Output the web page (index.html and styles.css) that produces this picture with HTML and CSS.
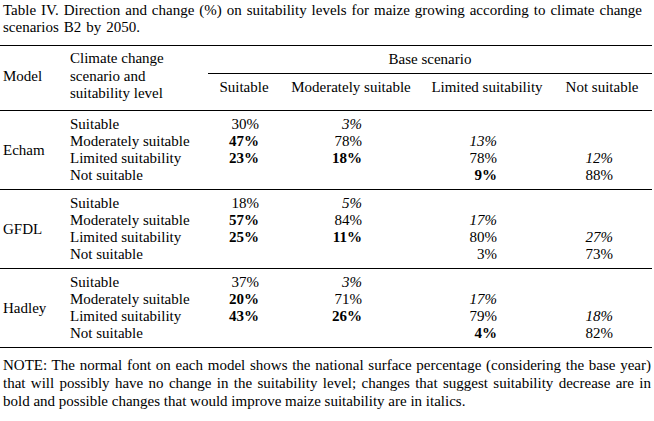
FILE: index.html
```html
<!DOCTYPE html>
<html>
<head>
<meta charset="utf-8">
<link rel="stylesheet" href="styles.css">
</head>
<body>
<div class="page">
  <p class="title">Table IV. Direction and change (%) on suitability levels for maize growing according to climate change<br>scenarios B2 by 2050.</p>
  <table class="data">
    <colgroup>
      <col class="w-model"><col class="w-scen"><col class="w-s"><col class="w-m"><col class="w-l"><col class="w-n">
    </colgroup>
    <thead>
      <tr>
        <th rowspan="2" class="h-model">Model</th>
        <th rowspan="2" class="h-scen">Climate change<br>scenario and<br>suitability level</th>
        <th colspan="4" class="h-base">Base scenario</th>
      </tr>
      <tr class="h-sub">
        <th>Suitable</th>
        <th>Moderately suitable</th>
        <th>Limited suitability</th>
        <th>Not suitable</th>
      </tr>
    </thead>
    <tbody>
      <tr class="first">
        <td rowspan="4" class="model">Echam</td>
        <td class="scen">Suitable</td><td>30%</td><td><i>3%</i></td><td></td><td></td>
      </tr>
      <tr>
        <td class="scen">Moderately suitable</td><td><b>47%</b></td><td>78%</td><td><i>13%</i></td><td></td>
      </tr>
      <tr>
        <td class="scen">Limited suitability</td><td><b>23%</b></td><td><b>18%</b></td><td>78%</td><td><i>12%</i></td>
      </tr>
      <tr class="last">
        <td class="scen">Not suitable</td><td></td><td></td><td><b>9%</b></td><td>88%</td>
      </tr>
    </tbody>
    <tbody>
      <tr class="first">
        <td rowspan="4" class="model">GFDL</td>
        <td class="scen">Suitable</td><td>18%</td><td><i>5%</i></td><td></td><td></td>
      </tr>
      <tr>
        <td class="scen">Moderately suitable</td><td><b>57%</b></td><td>84%</td><td><i>17%</i></td><td></td>
      </tr>
      <tr>
        <td class="scen">Limited suitability</td><td><b>25%</b></td><td><b>11%</b></td><td>80%</td><td><i>27%</i></td>
      </tr>
      <tr class="last">
        <td class="scen">Not suitable</td><td></td><td></td><td>3%</td><td>73%</td>
      </tr>
    </tbody>
    <tbody>
      <tr class="first">
        <td rowspan="4" class="model">Hadley</td>
        <td class="scen">Suitable</td><td>37%</td><td><i>3%</i></td><td></td><td></td>
      </tr>
      <tr>
        <td class="scen">Moderately suitable</td><td><b>20%</b></td><td>71%</td><td><i>17%</i></td><td></td>
      </tr>
      <tr>
        <td class="scen">Limited suitability</td><td><b>43%</b></td><td><b>26%</b></td><td>79%</td><td><i>18%</i></td>
      </tr>
      <tr class="last">
        <td class="scen">Not suitable</td><td></td><td></td><td><b>4%</b></td><td>82%</td>
      </tr>
    </tbody>
  </table>
  <div class="note">
    <span class="jl">NOTE: The normal font on each model shows the national surface percentage (considering the base year)</span>
    <span class="jl">that will possibly have no change in the suitability level; changes that suggest suitability decrease are in</span>
    <span class="ll">bold and possible changes that would improve maize suitability are in italics.</span>
  </div>
</div>
</body>
</html>
```

FILE: styles.css
```css
html, body {
  margin: 0;
  padding: 0;
  background: #fff;
}
body, table, th, td, p, div, span, b, i {
  font-family: "Liberation Serif", "Times New Roman", serif;
}
body {
  font-size: 15px;
  line-height: 17px;
  color: #000;
}
.page {
  width: 652px;
  padding-top: 2px;
}
.title {
  margin: 0 0 9px 0;
  padding-left: 3px;
  word-spacing: 1.2px;
}
.data {
  width: 652px;
  border-collapse: separate;
  border-spacing: 0;
  table-layout: fixed;
  font-size: 15px;
  line-height: 17px;
}
.w-model { width: 67px; }
.w-scen { width: 141px; }
.w-s { width: 72px; }
.w-m { width: 142px; }
.w-l { width: 130px; }
.w-n { width: 100px; }

.data th {
  font-weight: normal;
  font-size: 15px;
  padding: 0;
}
.h-model {
  border-top: 1px solid #000;
  border-bottom: 1px solid #000;
  text-align: left;
  vertical-align: top;
  padding: 22px 0 0 3px !important;
}
.h-scen {
  border-top: 1px solid #000;
  border-bottom: 1px solid #000;
  text-align: left;
  vertical-align: top;
  line-height: 17.5px;
  padding: 4px 0 0 3px !important;
}
.h-base {
  border-top: 1px solid #000;
  border-bottom: 1px solid #000;
  text-align: center;
  padding: 5px 0 5px 0 !important;
}
.h-sub th {
  border-bottom: 1px solid #000;
  text-align: center;
  vertical-align: top;
  padding: 5px 0 14px 0 !important;
}

.data td {
  padding: 0;
  font-size: 15px;
  text-align: right;
  vertical-align: top;
  white-space: nowrap;
}
.data td:nth-last-child(4) { padding-right: 21px; }
.data td:nth-last-child(3) { padding-right: 60px; }
.data td:nth-last-child(2) { padding-right: 55px; }
.data td:nth-last-child(1) { padding-right: 39px; }
.data td.scen {
  text-align: left;
  padding-left: 3px;
  padding-right: 0;
}
.data td.model {
  text-align: left;
  vertical-align: middle;
  padding: 5px 0 5px 3px;
  border-bottom: 1px solid #000;
}
.data tr.first td { padding-top: 5px; }
.data tr.last td {
  padding-bottom: 5px;
  border-bottom: 1px solid #000;
}
.data b { font-weight: bold; }
.data i { font-style: italic; }

.note {
  margin-top: 8px;
  padding-left: 3px;
  width: 648px;
  line-height: 18px;
}
.note .jl {
  display: block;
  text-align: justify;
  text-align-last: justify;
}
.note .ll {
  display: block;
  text-align: left;
}
```
